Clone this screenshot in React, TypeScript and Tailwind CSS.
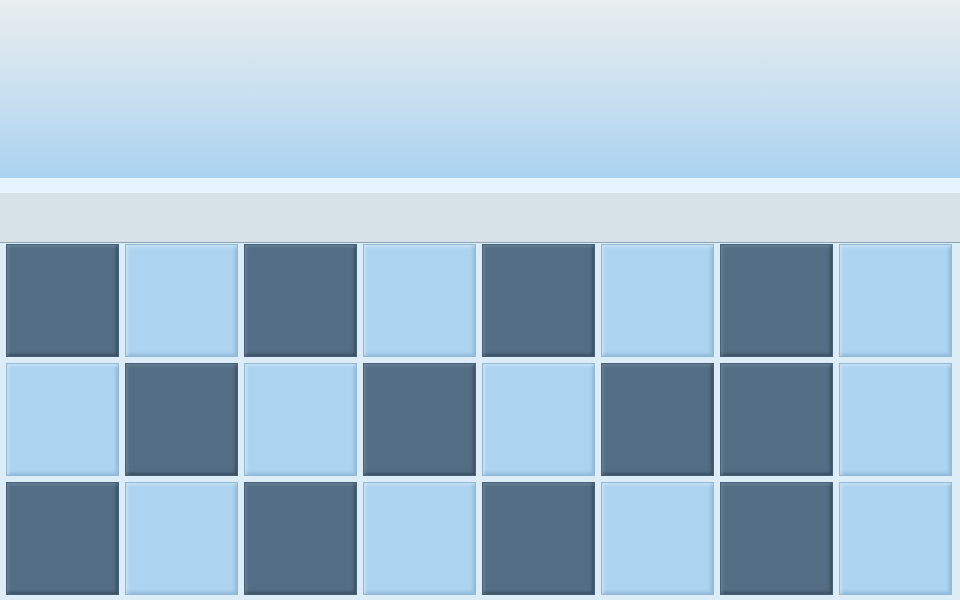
import React from "react";

// 1 = dark tile, 0 = light tile
const rows: number[][] = [
  [1, 0, 1, 0, 1, 0, 1, 0],
  [0, 1, 0, 1, 0, 1, 1, 0],
  [1, 0, 1, 0, 1, 0, 1, 0],
];

function Tile({ dark }: { dark: boolean }) {
  return dark ? (
    <div className="h-[113px] w-[113px] border border-[#48617a] bg-[#526d84] shadow-[inset_2px_2px_3px_rgba(255,255,255,0.12),inset_-2px_-2px_3px_rgba(0,0,0,0.28)]" />
  ) : (
    <div className="h-[113px] w-[113px] border border-[#93b9d8] bg-[#acd3f0] shadow-[inset_2px_2px_3px_rgba(255,255,255,0.35),inset_-2px_-2px_3px_rgba(70,110,150,0.25)]" />
  );
}

export default function App() {
  return (
    <div className="flex h-[600px] w-[960px] flex-col overflow-hidden bg-[#dcedf8]">
      <header className="h-[178px] shrink-0 bg-gradient-to-b from-[#eaeeef] to-[#aad3f0]" />
      <div className="h-[15px] shrink-0 bg-[#e8f4fd]" />
      <div className="h-[50px] shrink-0 border-b border-[#8ea2b2] bg-[#d6e1e8]" />
      <main className="flex flex-col gap-[6px] pl-[6px] pt-[1px]">
        {rows.map((row, r) => (
          <div key={r} className="flex gap-[6px]">
            {row.map((v, c) => (
              <Tile key={c} dark={v === 1} />
            ))}
          </div>
        ))}
      </main>
    </div>
  );
}
